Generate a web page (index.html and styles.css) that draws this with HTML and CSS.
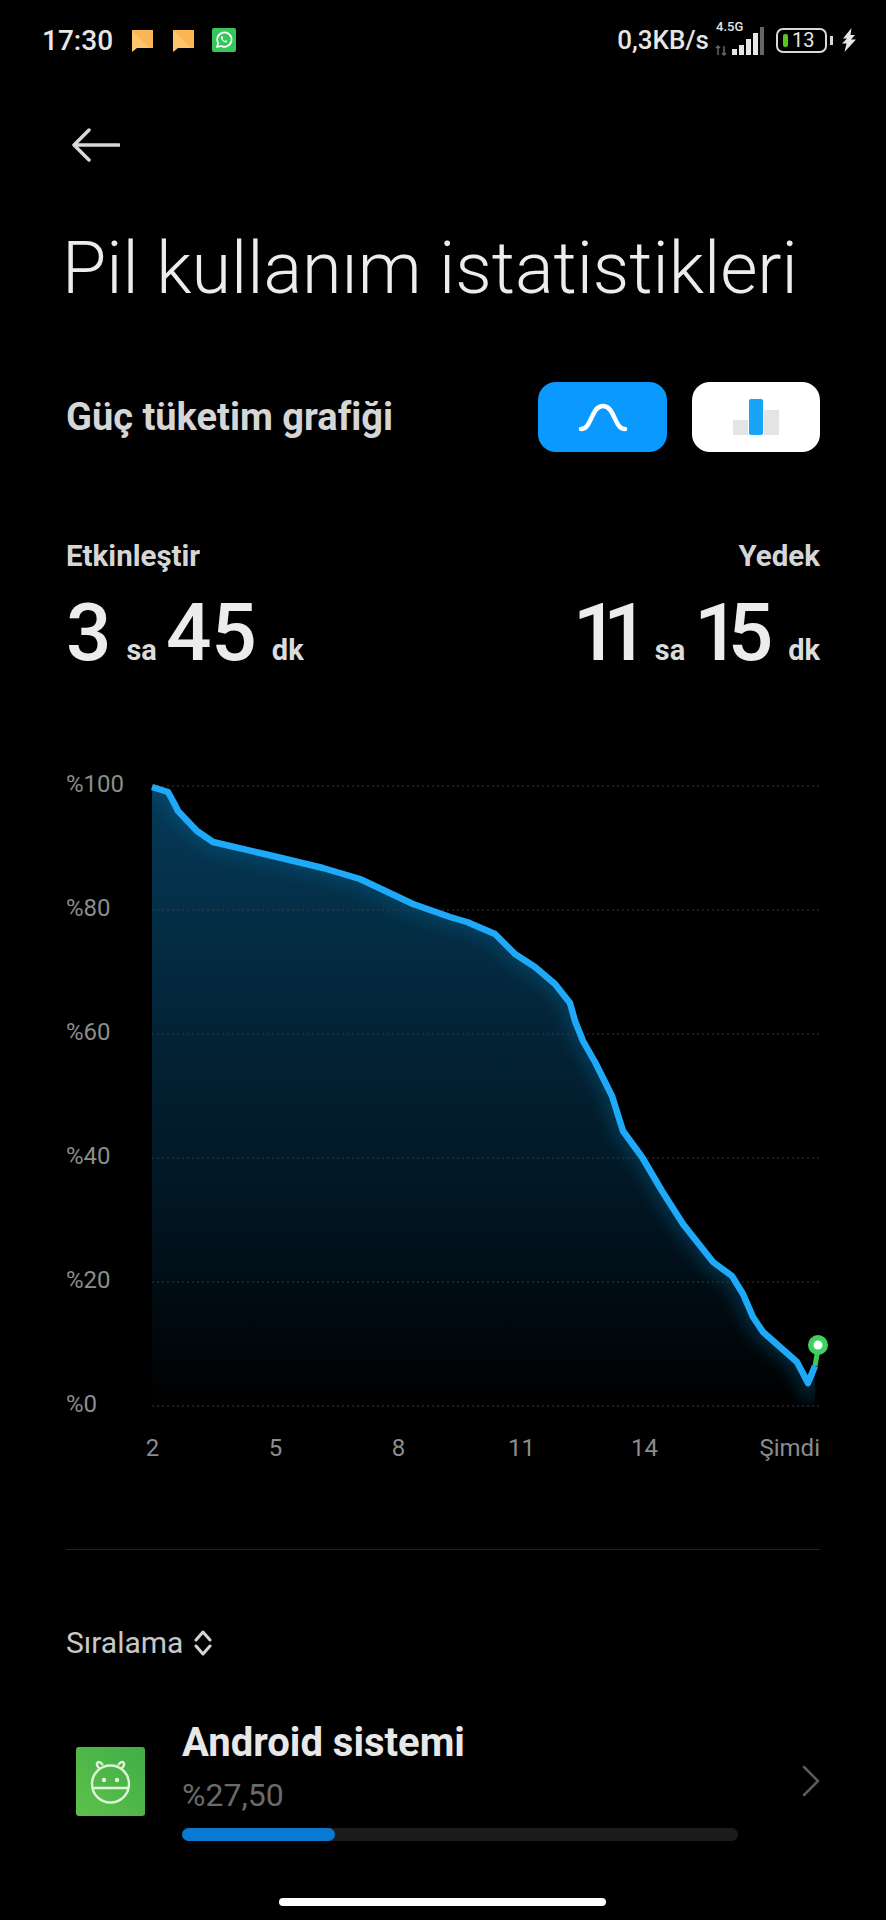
FILE: index.html
```html
<!DOCTYPE html>
<html lang="tr">
<head>
<meta charset="UTF-8">
<meta name="viewport" content="width=device-width, initial-scale=1.0">
<title>Pil kullanım istatistikleri</title>
<link rel="stylesheet" href="styles.css">
</head>
<body>

<div class="screen">

  <!-- Durum çubuğu -->
  <div class="status-bar">
    <div class="status-left">
      <span class="clock">17:30</span>
      <svg class="note-icon" viewBox="0 0 21 23"><defs><linearGradient id="noteFill" x1="0" y1="1" x2="1" y2="0"><stop offset="0.5" stop-color="#ffc46e"/><stop offset="0.5" stop-color="#fcb655"/></linearGradient></defs><path d="M0 1h21v18H5l-5 4z" fill="url(#noteFill)"/></svg>
      <svg class="note-icon" viewBox="0 0 21 23"><path d="M0 1h21v18H5l-5 4z" fill="url(#noteFill)"/></svg>
      <svg class="wa-icon" viewBox="0 0 24 24">
        <rect width="24" height="24" rx="2" fill="#34c759"/>
        <path d="M5 19l1.100-3.800A7.200 7.200 0 1 1 9 18z" fill="none" stroke="#fff" stroke-width="1.700" stroke-linejoin="round"/>
        <path d="M9.400 8.300c-.8.8-.6 2.200.6 3.800s2.700 2.600 3.900 2.400c.9-.2 1.400-.9 1.200-1.400l-1.600-.9-.8.8c-.8-.2-1.800-1.200-2.200-2.200l.7-.8-.7-1.700z" fill="#fff"/>
      </svg>
    </div>
    <div class="status-right">
      <span class="net-speed">0,3KB/s</span>
      <div class="signal">
        <span class="net-type">4.5G</span>
        <svg width="50" height="32" viewBox="0 0 50 32">
          <path d="M3 22v9M1 24l2-2 2 2M9 31v-9M7 29l2 2 2-2" stroke="#666" stroke-width="1.500" fill="none"/>
          <g fill="#e6e6e6">
            <rect x="17" y="25" width="5" height="6"/>
            <rect x="24" y="21" width="5" height="10"/>
            <rect x="31" y="15" width="5" height="16"/>
            <rect x="38" y="9" width="5" height="22"/>
          </g>
          <rect x="45" y="3" width="4" height="28" fill="#666"/>
        </svg>
      </div>
      <div class="battery">
        <span class="battery-level"></span>
        <span class="battery-num">13</span>
      </div>
      <span class="battery-tip"></span>
      <svg class="bolt" viewBox="0 0 14 24"><path d="M9.500 0L1 10.500h4L0 15.500h4.500L2.500 24 14 11.500H9l4-4.500H8.500z" fill="#e6e6e6"/></svg>
    </div>
  </div>

  <div class="back-row">
    <svg width="48" height="34" viewBox="0 0 48 34"><path d="M47 17H2M17 2L2 17l15 15" fill="none" stroke="#d8d8d8" stroke-width="3.500" stroke-linecap="round" stroke-linejoin="round"/></svg>
  </div>

  <h1 class="page-title">Pil kullanım istatistikleri</h1>

  <div class="graph-head">
    <span class="graph-title">Güç tüketim grafiği</span>
    <div class="graph-switch">
      <div class="switch-btn active">
        <svg width="50" height="30" viewBox="0 0 50 30"><path d="M3 27c11 0 10-23 22-23s11 23 22 23" fill="none" stroke="#fff" stroke-width="4.500" stroke-linecap="round"/></svg>
      </div>
      <div class="switch-btn">
        <svg width="46" height="36" viewBox="0 0 46 36">
          <rect x="0" y="21" width="15" height="15" fill="#e4e4e4"/>
          <rect x="31" y="11" width="15" height="25" fill="#e4e4e4"/>
          <rect x="16" y="0" width="14" height="36" rx="2" fill="#18a4f8"/>
        </svg>
      </div>
    </div>
  </div>

  <div class="stats">
    <div class="stat">
      <div class="stat-label">Etkinleştir</div>
      <div class="stat-value"><b>3</b><i>sa</i><b>45</b><i>dk</i></div>
    </div>
    <div class="stat stat-right">
      <div class="stat-label">Yedek</div>
      <div class="stat-value"><b class="tight-ones">11</b><i>sa</i><b class="tight">15</b><i>dk</i></div>
    </div>
  </div>

  <!-- Grafik -->
  <div class="chart">
    <div class="y-labels">
      <span>%100</span>
      <span>%80</span>
      <span>%60</span>
      <span>%40</span>
      <span>%20</span>
      <span>%0</span>
    </div>
    <svg class="plot" width="668" height="640" viewBox="152 780 668 640">
      <defs>
        <linearGradient id="areaFill" x1="0" y1="0" x2="0" y2="1">
          <stop offset="0" stop-color="#053a58"/>
          <stop offset="0.35" stop-color="#03263a"/>
          <stop offset="0.7" stop-color="#011420"/>
          <stop offset="1" stop-color="#000"/>
        </linearGradient>
        <path id="batteryLine" d="M152 788L168 793L174 804L178 812L197 832L213 843L273 857L323 869L360 880L413 905L450 918L467 923L495 935L515 955L535 968L555 985L570 1004L575 1022L583 1042L595 1063L612 1097L623 1132L642 1158L662 1192L683 1225L713 1263L732 1277L743 1295L753 1318L763 1333L797 1363L808 1384L815 1367"/>
        <clipPath id="areaClip">
          <path id="batteryArea" d="M152 788L168 793L174 804L178 812L197 832L213 843L273 857L323 869L360 880L413 905L450 918L467 923L495 935L515 955L535 968L555 985L570 1004L575 1022L583 1042L595 1063L612 1097L623 1132L642 1158L662 1192L683 1225L713 1263L732 1277L743 1295L753 1318L763 1333L797 1363L808 1384L815 1367V1408H152z"/>
        </clipPath>
        <filter id="soft" x="-10%" y="-10%" width="120%" height="120%"><feGaussianBlur stdDeviation="7"/></filter>
      </defs>
      <use href="#batteryArea" fill="url(#areaFill)"/>
      <g clip-path="url(#areaClip)">
        <use href="#batteryLine" class="line-glow" filter="url(#soft)"/>
      </g>
      <path class="grid-lines" d="M152 787H820M152 911H820M152 1035H820M152 1159H820M152 1283H820M152 1407H820"/>
      <use href="#batteryLine" class="line-main"/>
      <path d="M815 1367L818 1350" stroke="#3fc95c" stroke-width="5" fill="none"/>
      <circle cx="818" cy="1346" r="10" fill="#3fd160"/>
      <circle cx="818" cy="1346" r="4.500" fill="#fff"/>
    </svg>
  </div>

  <div class="x-labels">
    <span>2</span>
    <span>5</span>
    <span>8</span>
    <span>11</span>
    <span>14</span>
    <span class="x-now">Şimdi</span>
  </div>

  <div class="divider"></div>

  <div class="sort-row">
    <span>Sıralama</span>
    <svg width="18" height="26" viewBox="0 0 18 26"><path d="M2 10l7-8 7 8M2 16l7 8 7-8" fill="none" stroke="#d4d4d4" stroke-width="3" stroke-linecap="round" stroke-linejoin="round"/></svg>
  </div>

  <!-- Uygulama satırı -->
  <div class="app-row">
    <svg class="app-icon" viewBox="0 0 69 69">
      <defs><linearGradient id="appFill" x1="0" y1="1" x2="1" y2="0"><stop offset="0" stop-color="#5fc04c"/><stop offset="1" stop-color="#3fae45"/></linearGradient></defs>
      <rect width="69" height="69" rx="3" fill="url(#appFill)"/>
      <g fill="none" stroke="#dff5d8" stroke-width="2.400" stroke-linejoin="round">
        <circle cx="34.500" cy="37" r="18.500"/>
        <path d="M24 22c-4-3-4-7-1-7 2 0 3 2 4 3M45 22c4-3 4-7 1-7-2 0-3 2-4 3"/>
        <path d="M16 41h37"/>
      </g>
      <circle cx="28" cy="33" r="2.200" fill="#dff5d8"/>
      <circle cx="41" cy="33" r="2.200" fill="#dff5d8"/>
    </svg>
    <div class="app-info">
      <div class="app-name">Android sistemi</div>
      <div class="app-percent">%27,50</div>
      <div class="app-bar"><div class="app-bar-fill" style="width: 27.5%"></div></div>
    </div>
    <svg class="app-arrow" width="18" height="32" viewBox="0 0 18 32"><path d="M2 2l14 14L2 30" fill="none" stroke="#5a5a5a" stroke-width="2.500" stroke-linecap="round" stroke-linejoin="round"/></svg>
  </div>

  <div class="home-bar"></div>

</div>

</body>
</html>
```

FILE: styles.css
```css
html, body {
  margin: 0;
  padding: 0;
  background: #000;
}
.screen {
  position: relative;
  width: 886px;
  height: 1920px;
  overflow: hidden;
  background: #000;
  color: #e6e6e6;
  font-family: Roboto, "Liberation Sans", sans-serif;
}

/* status bar */
.status-bar {
  display: flex;
  justify-content: space-between;
  align-items: center;
  height: 40px;
  padding: 20px 30px 0 42px;
}
.status-left {
  display: flex;
  align-items: center;
}
.clock {
  font-size: 28px;
  font-weight: 500;
  margin-right: 19px;
}
.note-icon {
  width: 21px;
  height: 23px;
  margin-right: 20px;
}
.wa-icon {
  width: 24px;
  height: 24px;
  margin-left: -2px;
}
.status-right {
  display: flex;
  align-items: center;
}
.net-speed {
  font-size: 26px;
  font-weight: 500;
  margin-right: 6px;
}
.signal {
  position: relative;
  width: 50px;
  height: 32px;
  margin-right: 11px;
}
.net-type {
  position: absolute;
  left: 1px;
  top: -5px;
  font-size: 13px;
  font-weight: 500;
}
.battery {
  display: flex;
  align-items: center;
  gap: 4px;
  box-sizing: border-box;
  width: 51px;
  height: 25px;
  padding-left: 5px;
  border: 2.500px solid #d8d8d8;
  border-radius: 7px;
}
.battery-level {
  width: 5px;
  height: 13px;
  border-radius: 2px;
  background: #58c322;
}
.battery-num {
  font-size: 20px;
  line-height: 20px;
}
.battery-tip {
  width: 3px;
  height: 9px;
  margin-left: 3px;
  background: #d8d8d8;
}
.bolt {
  width: 14px;
  height: 24px;
  margin-left: 9px;
}

/* header */
.back-row {
  height: 34px;
  padding: 68px 0 0 72px;
}
.page-title {
  margin: 70px 0 0 62px;
  font-size: 72px;
  line-height: 74px;
  font-weight: 300;
  color: #ececec;
  white-space: nowrap;
}
.graph-head {
  display: flex;
  justify-content: space-between;
  align-items: center;
  margin: 76px 66px 0;
}
.graph-title {
  font-size: 38px;
  font-weight: 700;
  color: #d6d6d6;
}
.graph-switch {
  display: flex;
  gap: 25px;
}
.switch-btn {
  display: flex;
  align-items: center;
  justify-content: center;
  width: 128px;
  height: 70px;
  border-radius: 18px;
  background: #fff;
}
.switch-btn.active {
  width: 129px;
  background: #0a99ff;
}

/* stats */
.stats {
  display: flex;
  justify-content: space-between;
  margin: 87px 66px 0;
}
.stat-right {
  text-align: right;
}
.stat-label {
  font-size: 29.500px;
  line-height: 34px;
  font-weight: 700;
  color: #d6d6d6;
}
.stat-value {
  display: flex;
  align-items: baseline;
  justify-content: inherit;
  margin-top: 18px;
  line-height: 84px;
}
.stat-value b {
  font-size: 80px;
  font-weight: 500;
  color: #ececec;
}
.stat-value b.tight {
  margin-right: 12px;
  letter-spacing: -12px;
}
.stat-value b.tight-ones {
  margin-right: 6px;
  letter-spacing: -15px;
}
.stat-right .stat-value {
  justify-content: flex-end;
}
.stat-value i {
  margin: 0 9px 0 15px;
  font-size: 29px;
  font-style: normal;
  font-weight: 700;
  color: #dcdcdc;
}
.stat-value i:last-child {
  margin-right: 0;
}

/* chart */
.chart {
  display: flex;
  margin: 87px 0 0 66px;
}
.y-labels {
  display: flex;
  flex-direction: column;
  justify-content: space-between;
  box-sizing: border-box;
  width: 86px;
  height: 648px;
  margin-top: -9px;
  font-size: 24px;
  line-height: 28px;
  color: #8c8c8c;
}
.plot {
  display: block;
  overflow: visible;
}
.grid-lines {
  fill: none;
  stroke: #3a3a3a;
  stroke-width: 1;
  stroke-dasharray: 2 3;
}
.line-main {
  fill: none;
  stroke: #1eaaf8;
  stroke-width: 6.500;
  stroke-linejoin: round;
}
.line-glow {
  fill: none;
  stroke: #0a5f8c;
  stroke-opacity: 0.35;
  stroke-width: 22;
}
.x-labels {
  display: flex;
  margin: 15px 66px 0;
  padding-left: 25px;
  font-size: 24px;
  line-height: 28px;
  color: #8c8c8c;
}
.x-labels span {
  width: 123px;
  text-align: center;
}
.x-labels .x-now {
  width: auto;
  margin-left: auto;
}
.divider {
  height: 1px;
  margin: 87px 66px 0;
  background: #222;
}

/* list */
.sort-row {
  display: flex;
  align-items: center;
  gap: 11px;
  margin: 77px 66px 0;
  font-size: 30px;
  line-height: 32px;
  color: #c8c8c8;
}
.app-row {
  display: flex;
  align-items: center;
  margin: 62px 66px 0 76px;
}
.app-icon {
  flex: none;
  width: 69px;
  height: 69px;
  margin-right: 37px;
}
.app-info {
  flex: none;
  width: 556px;
}
.app-name {
  font-size: 40px;
  line-height: 44px;
  font-weight: 700;
  color: #e8e8e8;
}
.app-percent {
  margin-top: 12px;
  font-size: 32px;
  line-height: 36px;
  color: #6a6a6a;
}
.app-bar {
  height: 13px;
  margin-top: 15px;
  border-radius: 7px;
  background: #1c1c1c;
}
.app-bar-fill {
  height: 100%;
  border-radius: 7px;
  background: #0a7ad0;
}
.app-arrow {
  margin-left: auto;
}
.home-bar {
  position: absolute;
  left: 279px;
  bottom: 14px;
  width: 327px;
  height: 8px;
  border-radius: 4px;
  background: #fff;
}
```
